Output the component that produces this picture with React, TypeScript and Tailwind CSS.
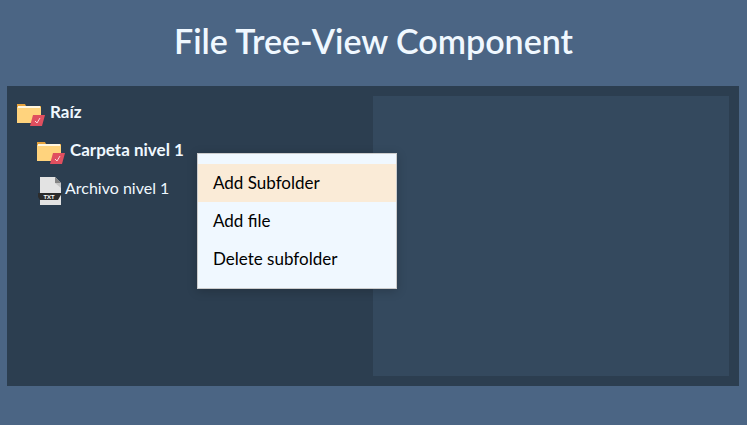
import { useState } from "react";

function FolderIcon() {
  return (
    <svg width="28" height="28" viewBox="0 0 28 28" className="shrink-0" aria-hidden="true">
      <path d="M0 4h8l1 2h15v4H0z" fill="#e6a23c" />
      <path d="M0 7h24v16H0z" fill="#ffd37d" />
      <path d="M1 6h22v2H1z" fill="#fff6e0" />
      <path d="M16 15h12l-3 11H13z" fill="#e04f5f" />
      <path d="M18 21l2 2 3-5" fill="none" stroke="#f7d5da" strokeWidth="1" />
    </svg>
  );
}

function TextFileIcon() {
  return (
    <svg width="25" height="28" viewBox="0 0 25 28" className="shrink-0" aria-hidden="true">
      <path d="M3 0h15l6 6v22H3z" fill="#e3e3e3" />
      <path d="M18 0l6 6h-6z" fill="#858585" />
      <path d="M18 6h6v5z" fill="#c4c4c4" />
      <path d="M1 16h24l-4 7H3l-2-3z" fill="#2b2b2b" />
      <text x="12" y="22" textAnchor="middle" fontSize="6" fontWeight="700" fill="#ffffff" fontFamily="Lato, sans-serif">
        TXT
      </text>
    </svg>
  );
}

const actions = ["Add Subfolder", "Add file", "Delete subfolder"];

function ContextMenu() {
  const [active, setActive] = useState(0);
  return (
    <div
      role="menu"
      className="absolute top-[67px] left-[190px] z-10 flex w-[200px] flex-col border border-[#cccccc] bg-[#f0f8ff] py-2.5 shadow-[0_2px_10px_rgba(0,0,0,0.2)]"
    >
      {actions.map((label, i) => (
        <button
          key={label}
          type="button"
          role="menuitem"
          onMouseEnter={() => setActive(i)}
          className={`h-[38px] px-[15px] text-left text-[17px] leading-6 text-black ${i === active ? "bg-[#faebd7]" : ""}`}
        >
          {label}
        </button>
      ))}
    </div>
  );
}

export default function App() {
  return (
    <div className="min-h-screen bg-[#4b6584] px-[7px] font-['Lato',sans-serif] text-[#f0f8ff]">
      <h1 className="pt-5 pb-6 text-center text-[34px] leading-[42px] font-semibold">File Tree-View Component</h1>
      <main className="relative mr-px grid min-h-[300px] grid-cols-2 bg-[#2c3e50] p-2.5">
        <ul role="tree" className="text-[17px] leading-8">
          <li role="treeitem" aria-expanded="true">
            <button type="button" className="flex h-[38px] items-start gap-[5px] font-bold">
              <span className="pt-1">
                <FolderIcon />
              </span>
              Raíz
            </button>
            <ul role="group" className="pl-5">
              <li role="treeitem">
                <button type="button" className="flex h-[38px] items-start gap-[5px] font-bold">
                  <span className="pt-1">
                    <FolderIcon />
                  </span>
                  Carpeta nivel 1
                </button>
              </li>
              <li role="treeitem">
                <button type="button" className="flex h-[38px] items-start gap-[3px] text-base leading-8">
                  <span className="pt-[5px]">
                    <TextFileIcon />
                  </span>
                  Archivo nivel 1
                </button>
              </li>
            </ul>
          </li>
        </ul>
        <section aria-label="Preview" className="bg-[#34495e]" />
        <ContextMenu />
      </main>
    </div>
  );
}
